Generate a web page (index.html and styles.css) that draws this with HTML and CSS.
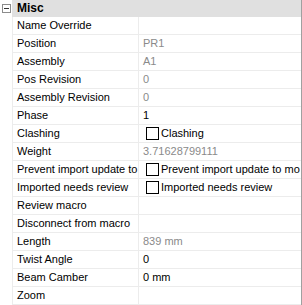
FILE: index.html
```html
<!DOCTYPE html>
<html lang="en">
<head>
  <meta charset="UTF-8" />
  <title>Properties</title>
  <link rel="stylesheet" href="styles.css">
</head>
<body>
  <div class="grid">
    <div class="category">
      <div class="margin"><span class="toggle"></span></div>
      <div class="category-name">Misc</div>
    </div>

    <div class="row"><div class="margin"></div><div class="label">Name Override</div><div class="value"></div></div>
    <div class="row"><div class="margin"></div><div class="label">Position</div><div class="value readonly">PR1</div></div>
    <div class="row"><div class="margin"></div><div class="label">Assembly</div><div class="value readonly">A1</div></div>
    <div class="row"><div class="margin"></div><div class="label">Pos Revision</div><div class="value readonly">0</div></div>
    <div class="row"><div class="margin"></div><div class="label">Assembly Revision</div><div class="value readonly">0</div></div>
    <div class="row"><div class="margin"></div><div class="label">Phase</div><div class="value">1</div></div>
    <div class="row"><div class="margin"></div><div class="label">Clashing</div><div class="value"><span class="check"></span>Clashing</div></div>
    <div class="row"><div class="margin"></div><div class="label">Weight</div><div class="value readonly">3.71628799111</div></div>
    <div class="row"><div class="margin"></div><div class="label">Prevent import update to</div><div class="value"><span class="check"></span>Prevent import update to mo</div></div>
    <div class="row"><div class="margin"></div><div class="label">Imported needs review</div><div class="value"><span class="check"></span>Imported needs review</div></div>
    <div class="row"><div class="margin"></div><div class="label">Review macro</div><div class="value"></div></div>
    <div class="row"><div class="margin"></div><div class="label">Disconnect from macro</div><div class="value"></div></div>
    <div class="row"><div class="margin"></div><div class="label">Length</div><div class="value unit readonly">839 mm</div></div>
    <div class="row"><div class="margin"></div><div class="label">Twist Angle</div><div class="value unit">0</div></div>
    <div class="row"><div class="margin"></div><div class="label">Beam Camber</div><div class="value unit">0 mm</div></div>
    <div class="row"><div class="margin"></div><div class="label">Zoom</div><div class="value"></div></div>
  </div>
</body>
</html>
```

FILE: styles.css
```css
body {
  margin: 0;
  background: #fff;
  font-family: "Liberation Sans", Arial, sans-serif;
  font-size: 11px;
  color: #000;
}

.grid {
  width: 301px;
  border-right: 1px solid #a0a0a0;
}

.category,
.row {
  display: grid;
  grid-template-columns: 12px 1fr;
  height: 17px;
}

.row {
  grid-template-columns: 12px 127px 1fr;
  height: 18px;
}

.margin {
  position: relative;
}

.toggle {
  position: absolute;
  left: 2px;
  top: 4px;
  width: 7px;
  height: 7px;
  border: 1px solid #8c8c8c;
  background: #fff;
}

.toggle::after {
  content: "";
  position: absolute;
  left: 1px;
  top: 3px;
  width: 5px;
  height: 1px;
  background: #333;
}

.category-name {
  background: #e0e0e0;
  font-weight: bold;
  font-size: 12px;
  line-height: 17px;
  padding-left: 5px;
}

.label,
.value {
  border-bottom: 1px solid #ececec;
  line-height: 17px;
  white-space: nowrap;
  overflow: hidden;
}

.label {
  border-left: 1px solid #ececec;
  border-right: 1px solid #ececec;
  padding-left: 4px;
}

.value {
  padding-left: 4px;
  display: flex;
  align-items: center;
}

.readonly {
  color: #8a8a8a;
}

.unit {
  font-size: 11px;
}

.check {
  flex: none;
  width: 11px;
  height: 11px;
  border: 1px solid #000;
  margin: 0 2px 0 3px;
}
```
